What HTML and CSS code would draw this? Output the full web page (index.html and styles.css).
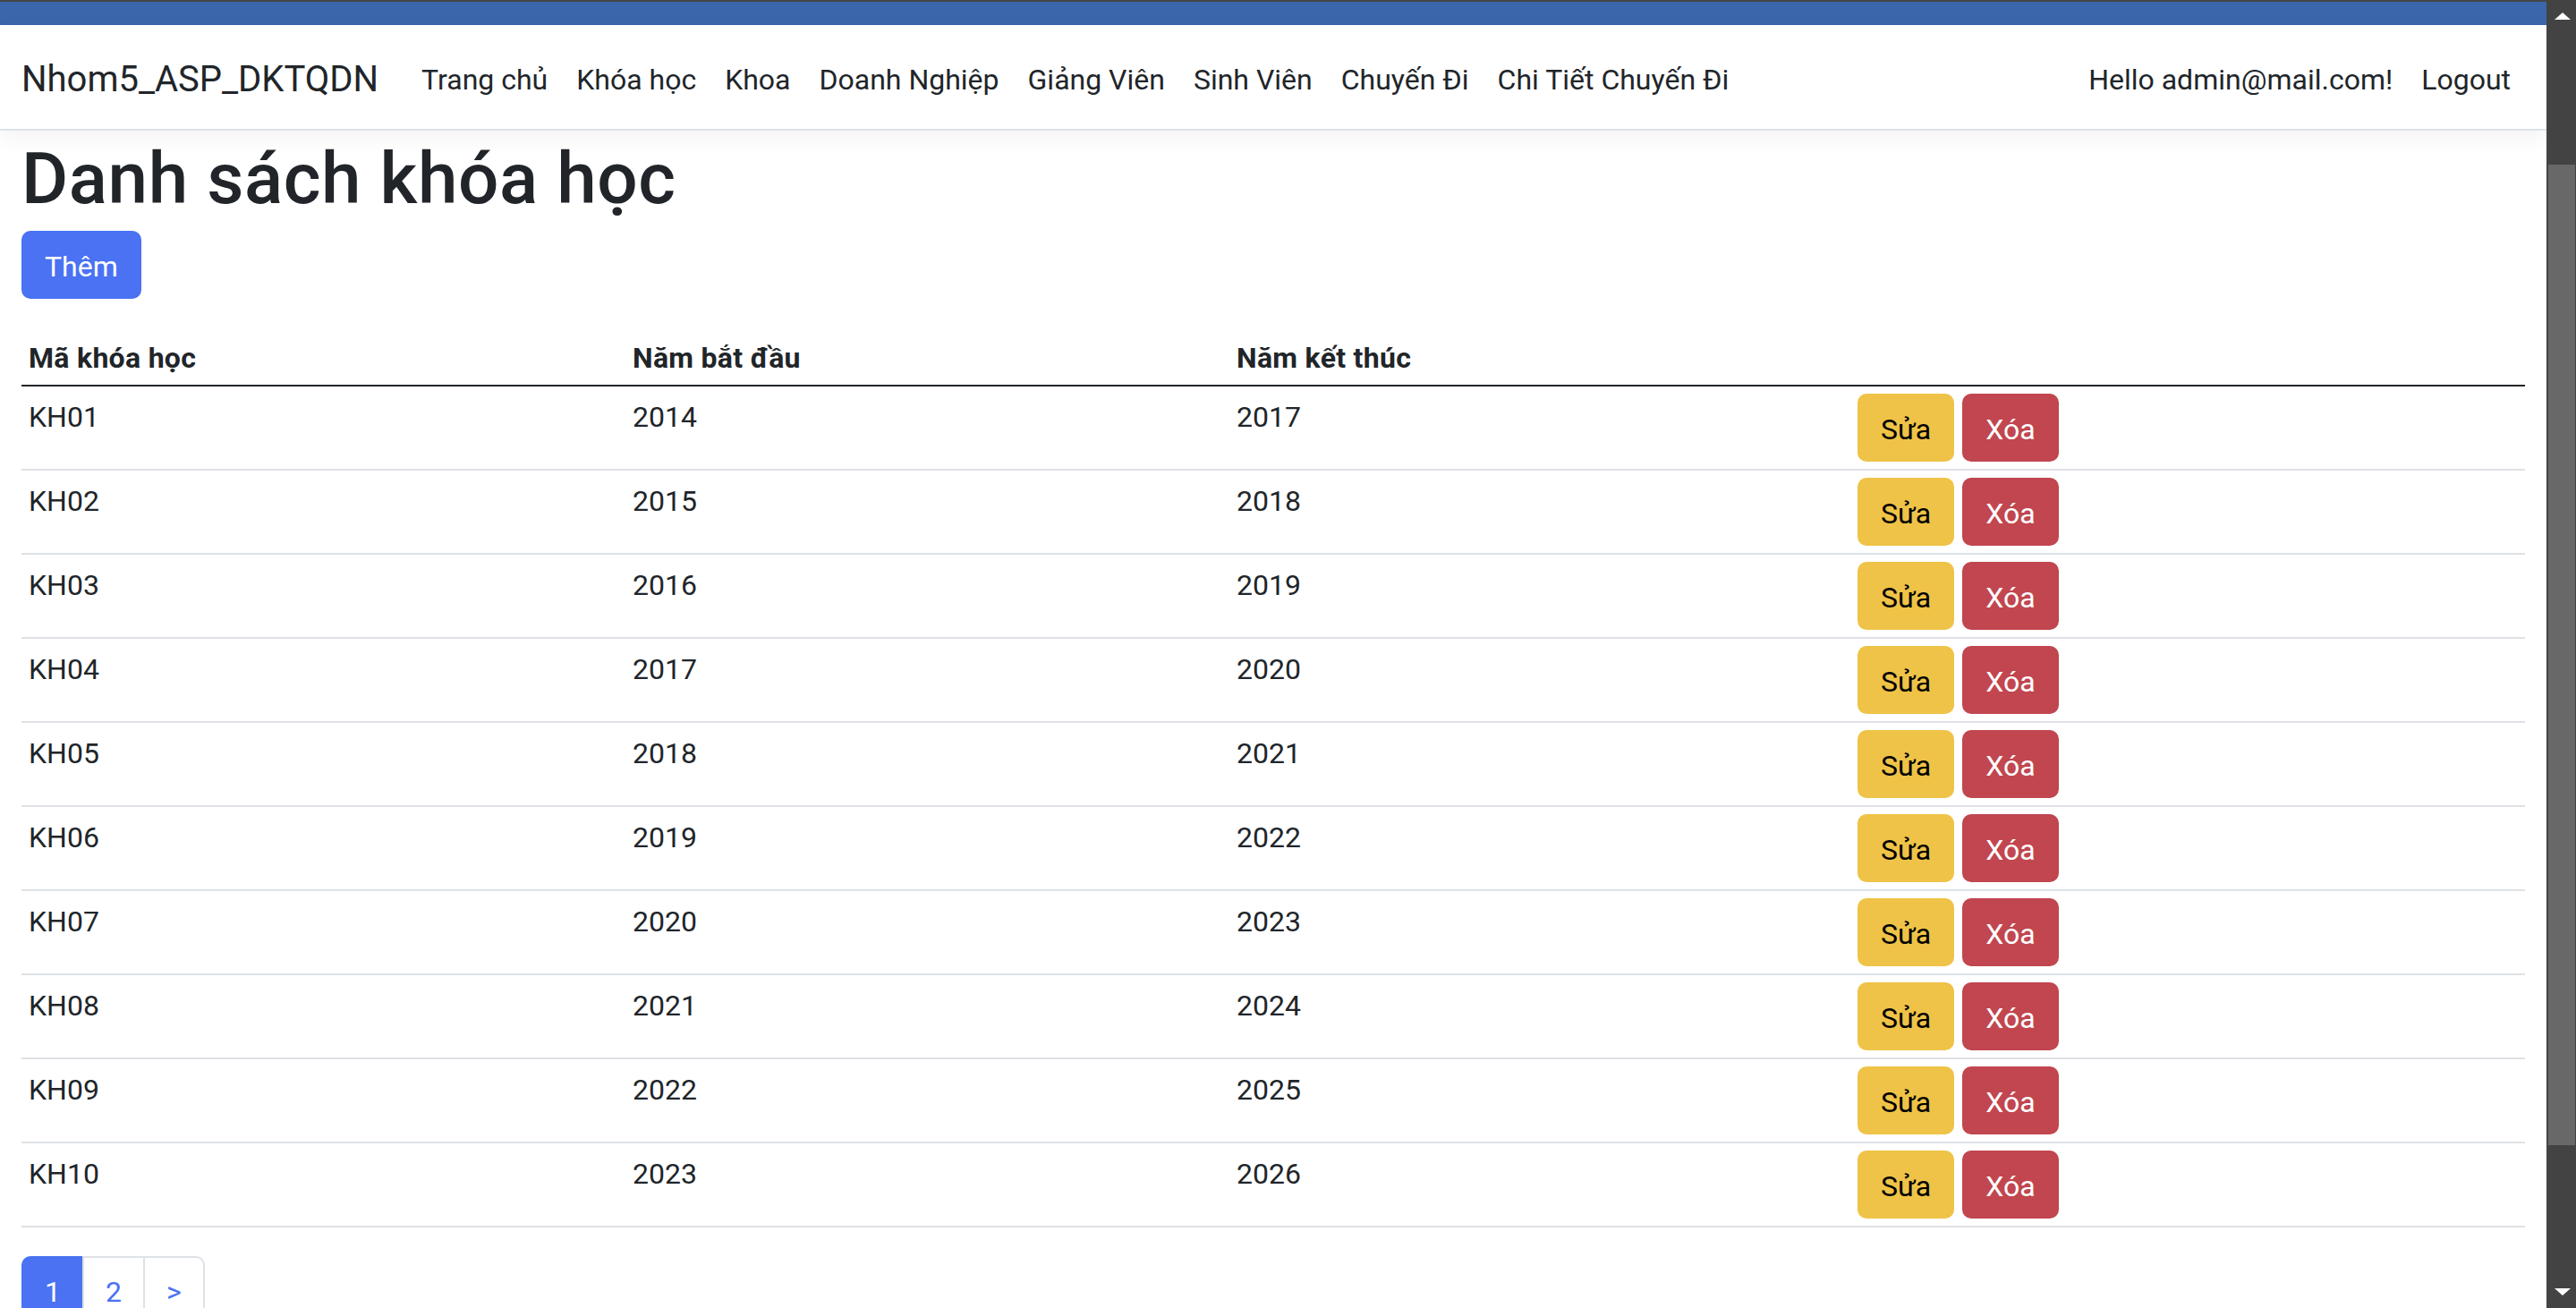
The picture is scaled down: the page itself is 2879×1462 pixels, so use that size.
FILE: index.html
```html
<!DOCTYPE html>
<html lang="vi">
<head>
<meta charset="utf-8">
<title>Danh sách khóa học - Nhom5_ASP_DKTQDN</title>
<link rel="stylesheet" href="styles.css">
</head>
<body>
<div class="screen">
  <div class="page">
    <div class="topbar"></div>
    <header class="navbar">
      <a class="brand" href="#">Nhom5_ASP_DKTQDN</a>
      <ul class="nav">
        <li><a class="nav-link" href="#">Trang chủ</a></li>
        <li><a class="nav-link" href="#">Khóa học</a></li>
        <li><a class="nav-link" href="#">Khoa</a></li>
        <li><a class="nav-link" href="#">Doanh Nghiệp</a></li>
        <li><a class="nav-link" href="#">Giảng Viên</a></li>
        <li><a class="nav-link" href="#">Sinh Viên</a></li>
        <li><a class="nav-link" href="#">Chuyến Đi</a></li>
        <li><a class="nav-link" href="#">Chi Tiết Chuyến Đi</a></li>
      </ul>
      <ul class="nav nav-right">
        <li><a class="nav-link" href="#">Hello admin@mail.com!</a></li>
        <li><a class="nav-link" href="#">Logout</a></li>
      </ul>
    </header>
    <main class="container">
      <h1 class="title">Danh sách khóa học</h1>
      <p class="toolbar"><a class="btn btn-primary" href="#">Thêm</a></p>
      <table class="table">
        <colgroup>
          <col class="col-code">
          <col class="col-start">
          <col class="col-end">
          <col class="col-actions">
        </colgroup>
        <thead>
          <tr><th>Mã khóa học</th><th>Năm bắt đầu</th><th>Năm kết thúc</th><th></th></tr>
        </thead>
        <tbody>
          <tr><td>KH01</td><td>2014</td><td>2017</td><td class="cell-actions"><div class="row-actions"><a class="btn btn-warning" href="#">Sửa</a><a class="btn btn-danger" href="#">Xóa</a></div></td></tr>
          <tr><td>KH02</td><td>2015</td><td>2018</td><td class="cell-actions"><div class="row-actions"><a class="btn btn-warning" href="#">Sửa</a><a class="btn btn-danger" href="#">Xóa</a></div></td></tr>
          <tr><td>KH03</td><td>2016</td><td>2019</td><td class="cell-actions"><div class="row-actions"><a class="btn btn-warning" href="#">Sửa</a><a class="btn btn-danger" href="#">Xóa</a></div></td></tr>
          <tr><td>KH04</td><td>2017</td><td>2020</td><td class="cell-actions"><div class="row-actions"><a class="btn btn-warning" href="#">Sửa</a><a class="btn btn-danger" href="#">Xóa</a></div></td></tr>
          <tr><td>KH05</td><td>2018</td><td>2021</td><td class="cell-actions"><div class="row-actions"><a class="btn btn-warning" href="#">Sửa</a><a class="btn btn-danger" href="#">Xóa</a></div></td></tr>
          <tr><td>KH06</td><td>2019</td><td>2022</td><td class="cell-actions"><div class="row-actions"><a class="btn btn-warning" href="#">Sửa</a><a class="btn btn-danger" href="#">Xóa</a></div></td></tr>
          <tr><td>KH07</td><td>2020</td><td>2023</td><td class="cell-actions"><div class="row-actions"><a class="btn btn-warning" href="#">Sửa</a><a class="btn btn-danger" href="#">Xóa</a></div></td></tr>
          <tr><td>KH08</td><td>2021</td><td>2024</td><td class="cell-actions"><div class="row-actions"><a class="btn btn-warning" href="#">Sửa</a><a class="btn btn-danger" href="#">Xóa</a></div></td></tr>
          <tr><td>KH09</td><td>2022</td><td>2025</td><td class="cell-actions"><div class="row-actions"><a class="btn btn-warning" href="#">Sửa</a><a class="btn btn-danger" href="#">Xóa</a></div></td></tr>
          <tr><td>KH10</td><td>2023</td><td>2026</td><td class="cell-actions"><div class="row-actions"><a class="btn btn-warning" href="#">Sửa</a><a class="btn btn-danger" href="#">Xóa</a></div></td></tr>
        </tbody>
      </table>
      <ul class="pagination">
        <li><a class="page-link active" href="#">1</a></li>
        <li><a class="page-link" href="#">2</a></li>
        <li><a class="page-link" href="#">&gt;</a></li>
      </ul>
    </main>
  </div>
  <div class="scrollbar">
    <div class="sb-arrow sb-up"><span class="tri tri-up"></span></div>
    <div class="sb-track"><div class="sb-thumb"></div></div>
    <div class="sb-arrow sb-down"><span class="tri tri-down"></span></div>
  </div>
</div>
</body>
</html>
```
FILE: styles.css
```css
* { box-sizing: border-box; }

html, body {
  margin: 0;
  padding: 0;
  height: 1462px;
  overflow: hidden;
  background: #fff;
}

body {
  font-family: "Segoe UI", Roboto, "Noto Sans", "Liberation Sans", sans-serif;
  font-size: 32px;
  line-height: 48px;
  color: #212529;
}

a { text-decoration: none; }

.screen {
  display: flex;
  height: 1462px;
}

.page {
  flex: 1;
  min-width: 0;
  overflow: hidden;
  border-top: 2px solid #454545;
}

.topbar {
  height: 26px;
  background: #3c66ac;
}

.navbar {
  position: relative;
  z-index: 1;
  display: flex;
  align-items: center;
  height: 118px;
  padding: 5px 24px 0;
  background: #fff;
  border-bottom: 2px solid #dee2e6;
  box-shadow: 0 8px 24px rgba(0, 0, 0, 0.05);
}

.brand {
  font-size: 40px;
  line-height: 60px;
  color: #212529;
  margin-right: 32px;
  white-space: nowrap;
}

.nav {
  display: flex;
  list-style: none;
  margin: 0;
  padding: 0;
}

.nav-right { margin-left: auto; }

.nav-link {
  display: block;
  padding: 0 16px;
  font-size: 32px;
  line-height: 48px;
  color: #212529;
  white-space: nowrap;
}

.container {
  padding: 0 24px;
}

.title {
  margin: 0 0 10px;
  padding-top: 6px;
  font-size: 80px;
  font-weight: 500;
  line-height: 96px;
  letter-spacing: 0.6px;
}

.toolbar {
  margin: 0 0 32px;
}

.btn {
  display: inline-block;
  padding: 14px 24px 10px;
  font-size: 32px;
  line-height: 48px;
  border: 2px solid transparent;
  border-radius: 10px;
  vertical-align: middle;
  white-space: nowrap;
}

.btn-primary { background: #4a72f2; border-color: #4a72f2; color: #fff; }
.btn-warning { background: #efc347; border-color: #efc347; color: #000; }
.btn-danger { background: #c1464f; border-color: #c1464f; color: #fff; }

.table {
  width: 100%;
  border-collapse: collapse;
  table-layout: fixed;
  margin-bottom: 32px;
}

.col-code { width: 675px; }
.col-start { width: 675px; }
.col-end { width: 694px; }

.table th {
  text-align: left;
  padding: 10px 8px 6px;
  font-weight: 700;
  line-height: 48px;
  letter-spacing: 0.3px;
  vertical-align: bottom;
  border-bottom: 2px solid #212529;
}

.table td {
  padding: 10px 8px 6px;
  line-height: 48px;
  vertical-align: top;
  border-bottom: 2px solid #dee2e6;
}

.table td.cell-actions {
  padding: 8px;
}

.row-actions {
  display: flex;
  gap: 9px;
}

.pagination {
  display: flex;
  list-style: none;
  margin: 0;
  padding: 0;
}

.page-link {
  display: block;
  padding: 14px 24px 10px;
  font-size: 32px;
  line-height: 48px;
  color: #4a72f2;
  background: #fff;
  border: 2px solid #dee2e6;
  margin-left: -2px;
}

.pagination li:first-child .page-link {
  margin-left: 0;
  border-radius: 10px 0 0 10px;
}

.pagination li:last-child .page-link {
  border-radius: 0 10px 10px 0;
}

.page-link.active {
  background: #4a72f2;
  border-color: #4a72f2;
  color: #fff;
}

.scrollbar {
  width: 33px;
  height: 1462px;
  background: #434343;
  display: flex;
  flex-direction: column;
}

.sb-arrow {
  display: flex;
  align-items: center;
  justify-content: center;
  padding-left: 2px;
}

.sb-up { height: 36px; }
.sb-down { height: 32px; align-items: flex-start; padding-top: 10px; }

.sb-track {
  flex: 1;
  padding-top: 148px;
  padding-left: 2px;
}

.sb-thumb {
  width: 30px;
  height: 1096px;
  background: #686868;
}

.tri {
  width: 0;
  height: 0;
  border-left: 9px solid transparent;
  border-right: 9px solid transparent;
}

.tri-up { border-bottom: 8px solid #fff; }
.tri-down { border-top: 8px solid #fff; }
```
